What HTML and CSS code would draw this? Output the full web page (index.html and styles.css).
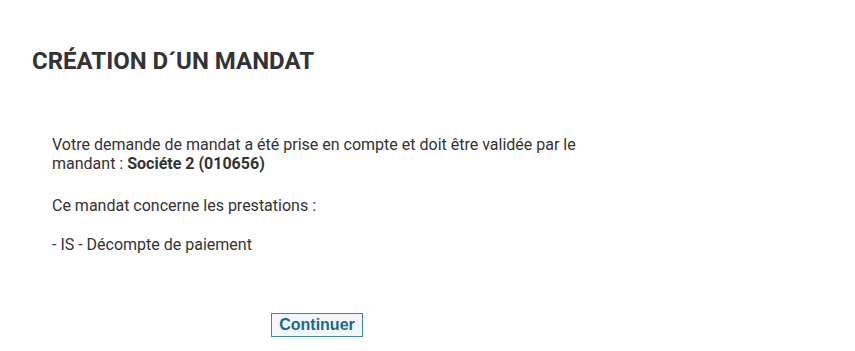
FILE: index.html
```html
<!DOCTYPE html>
<html lang="fr">
<head>
<meta charset="utf-8">
<title>Création d'un mandat</title>
<link rel="stylesheet" href="styles.css">
</head>
<body>
<div class="page">
  <h1 class="title">CRÉATION D´UN MANDAT</h1>
  <div class="content">
    <p class="msg">Votre demande de mandat a été prise en compte et doit être validée par le mandant : <strong>Sociéte 2 (010656)</strong></p>
    <p class="msg msg-second">Ce mandat concerne les prestations :</p>
    <p class="msg msg-third">- IS - Décompte de paiement</p>
  </div>
  <div class="actions">
    <button class="btn" type="button">Continuer</button>
  </div>
</div>
</body>
</html>
```
FILE: styles.css
```css
html, body {
  margin: 0;
  padding: 0;
  background: #ffffff;
}
body {
  font-family: Roboto, "Liberation Sans", Arial, sans-serif;
  color: #333333;
}
.page {
  width: 570px;
  padding: 0 0 0 32px;
}
.title {
  margin: 47px 0 0 0;
  font-size: 24px;
  line-height: 28px;
  font-weight: 700;
  color: #333333;
}
.content {
  padding: 0 0 0 20px;
  margin-top: 60px;
  width: 530px;
}
.msg {
  margin: 0;
  font-size: 16px;
  line-height: 19px;
}
.msg strong {
  font-weight: 700;
}
.msg-second {
  margin-top: 23px;
}
.msg-third {
  margin-top: 20px;
}
.actions {
  display: flex;
  justify-content: center;
  margin-top: 59px;
}
.btn {
  font-family: "Liberation Sans", Arial, sans-serif;
  font-size: 16px;
  font-weight: 700;
  color: #1b6a8c;
  background: #f3f7f9;
  border: 1px solid #3d8aa6;
  border-radius: 0;
  padding: 2px 7px;
  line-height: 18px;
  margin: 0;
  cursor: pointer;
}
```
